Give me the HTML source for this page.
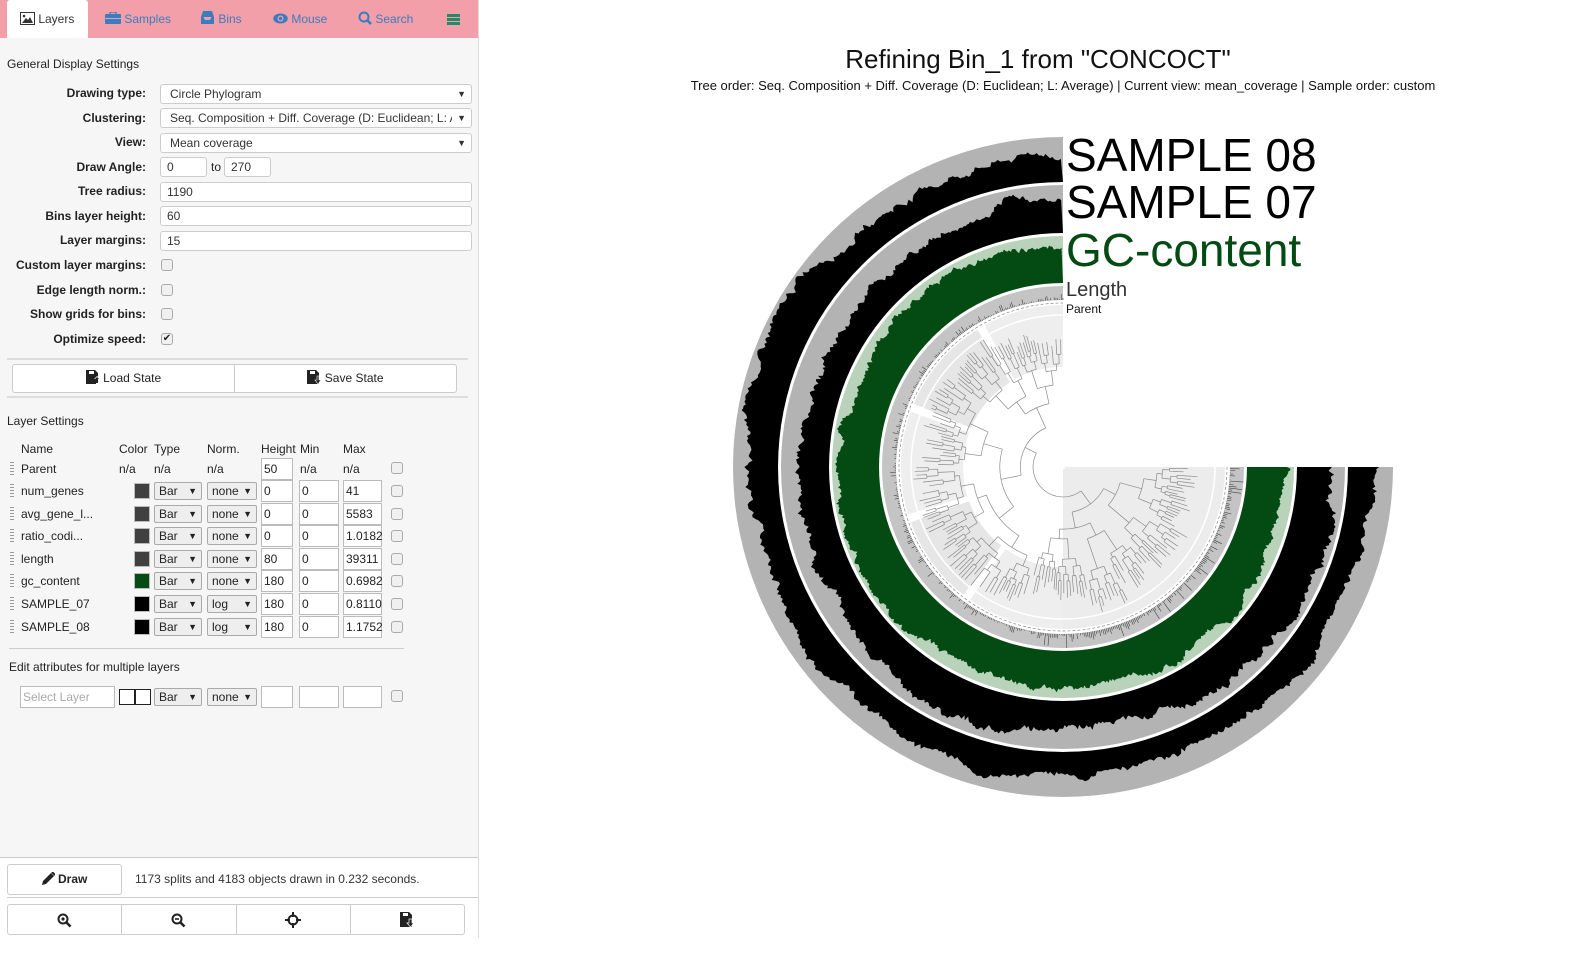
<!DOCTYPE html>
<html><head><meta charset="utf-8">
<style>
*{box-sizing:border-box}
body{margin:0;width:1596px;height:954px;background:#fff;font-family:"Liberation Sans",sans-serif;position:relative;overflow:hidden;color:#222}
.a{position:absolute}
#panel{position:absolute;left:0;top:0;width:479px;height:938px;border-right:1px solid #ddd;background:#f6f6f6}
#tabs{position:absolute;left:0;top:0;width:478px;height:38px;background:#f39faa}
.tab{position:absolute;top:0;height:38px;line-height:38px;font-size:12px;color:#3a7cc0}
.lbl{position:absolute;left:0;width:146px;text-align:right;font-weight:bold;font-size:12px;color:#222}
.inp{position:absolute;left:160px;width:312px;height:20px;border:1px solid #ccc;border-radius:3px;background:#fff;font-size:12px;padding-left:9px;line-height:18px;color:#333}
.cb{position:absolute;width:12px;height:12px;border:1px solid #aaa;border-radius:3px;background:#f0f0f0}
.t{position:absolute;font-size:12px;color:#222}
.sw{position:absolute;left:134px;width:16px;height:16px;border:1px solid #bbb}
.sel{position:absolute;height:18px;border:1px solid #aaa;border-radius:2px;background:#eee;font-size:12px;line-height:16px;padding-left:4px;color:#222}
.sel span{position:absolute;right:4px;font-size:9px}
.bx{position:absolute;height:22px;border:1px solid #bbb;background:#fff;font-size:12px;line-height:20px;padding-left:2px}
.hd{position:absolute;left:10px;width:4px;height:14px;background:repeating-linear-gradient(#999 0 1px,transparent 1px 3px);}
.hd:after{content:"";position:absolute;left:3px;top:0;width:1px;height:14px;background:repeating-linear-gradient(#999 0 1px,transparent 1px 3px)}
.btn{position:absolute;border:1px solid #ccc;background:#fff;font-size:12px;text-align:center;color:#222}
.hr{position:absolute;height:2px;background:#ddd}
</style></head><body>
<div id="panel">
<div class="a" style="left:0;top:858px;width:478px;height:80px;background:#fff"></div>
<div id="tabs">
 <div class="tab" style="left:7px;width:81px;background:#fff;color:#333;padding-left:13px;border-radius:3px 3px 0 0">
  <svg width="15" height="13" viewBox="0 0 15 13" style="vertical-align:-2px"><rect x="0.5" y="0.5" width="14" height="12" fill="#fff" stroke="#333"/><path d="M2 11 L6 6 L8 8 L10 5 L13 11Z" fill="#333"/><circle cx="4" cy="4" r="1.3" fill="#333"/></svg> Layers</div>
 <div class="tab" style="left:105px"><svg width="16" height="12" viewBox="0 0 16 12" style="vertical-align:-1px"><rect x="0" y="2" width="16" height="10" rx="1" fill="#3a7cc0"/><rect x="5" y="0" width="6" height="3" fill="none" stroke="#3a7cc0" stroke-width="1.3"/><rect x="0" y="6" width="16" height="1" fill="#f39faa"/></svg> Samples</div>
 <div class="tab" style="left:200px"><svg width="15" height="14" viewBox="0 0 15 14" style="vertical-align:-2px"><path d="M1 6 L3 0 H12 L14 6 V13 H1Z" fill="#3a7cc0"/><path d="M3.5 6 H11.5 L10 9 H5Z" fill="#f39faa"/></svg> Bins</div>
 <div class="tab" style="left:273px"><svg width="15" height="11" viewBox="0 0 15 11" style="vertical-align:-1px"><ellipse cx="7.5" cy="5.5" rx="7.3" ry="5" fill="#3a7cc0"/><circle cx="7.5" cy="5.5" r="3" fill="#f39faa"/><circle cx="7.5" cy="5.5" r="1.8" fill="#3a7cc0"/></svg> Mouse</div>
 <div class="tab" style="left:358px"><svg width="14" height="14" viewBox="0 0 14 14" style="vertical-align:-2px"><circle cx="6" cy="6" r="4.5" fill="none" stroke="#3a7cc0" stroke-width="2"/><path d="M9 9 L13 13" stroke="#3a7cc0" stroke-width="2.5"/></svg> Search</div>
 <div class="a" style="left:447px;top:14px;width:13px;height:11px;background:linear-gradient(#248a6a 0 3px,transparent 3px 4px,#248a6a 4px 7px,transparent 7px 8px,#248a6a 8px 11px)"></div>
</div>
<div class="t" style="left:7px;top:57px">General Display Settings</div>

<div class="lbl" style="top:86px">Drawing type:</div><div class="inp" style="top:84px">Circle Phylogram<span class="a" style="right:5px;font-size:9px">▼</span></div>
<div class="lbl" style="top:111px">Clustering:</div><div class="inp" style="top:108px;overflow:hidden;white-space:nowrap">Seq. Composition + Diff. Coverage (D: Euclidean; L: A<span class="a" style="right:0;padding:0 5px;background:#fff;font-size:9px">▼</span></div>
<div class="lbl" style="top:135px">View:</div><div class="inp" style="top:133px">Mean coverage<span class="a" style="right:5px;font-size:9px">▼</span></div>
<div class="lbl" style="top:160px">Draw Angle:</div><div class="inp" style="top:157px;width:47px;padding-left:6px">0</div><div class="t" style="left:211px;top:160px">to</div><div class="inp" style="top:157px;left:224px;width:47px;padding-left:6px">270</div>
<div class="lbl" style="top:184px">Tree radius:</div><div class="inp" style="top:182px;padding-left:6px">1190</div>
<div class="lbl" style="top:209px">Bins layer height:</div><div class="inp" style="top:206px;padding-left:6px">60</div>
<div class="lbl" style="top:233px">Layer margins:</div><div class="inp" style="top:231px;padding-left:6px">15</div>
<div class="lbl" style="top:258px">Custom layer margins:</div><div class="cb" style="left:161px;top:259px"></div>
<div class="lbl" style="top:283px">Edge length norm.:</div><div class="cb" style="left:161px;top:284px"></div>
<div class="lbl" style="top:307px">Show grids for bins:</div><div class="cb" style="left:161px;top:308px"></div>
<div class="lbl" style="top:332px">Optimize speed:</div><div class="cb" style="left:161px;top:333px;font-size:10px;line-height:10px;text-align:center">✔</div>

<div class="hr" style="left:7px;top:358px;width:461px"></div>
<div class="btn" style="left:12px;top:364px;width:223px;height:29px;line-height:27px;border-radius:3px 0 0 3px"><svg width="14" height="14" viewBox="0 0 14 14" style="vertical-align:-2px"><path d="M0 0 H9 L12 3 V14 H0Z" fill="#222"/><rect x="3" y="1" width="5" height="3" fill="#fff"/><path d="M11 6 L14 9 H12 V14 H10 V9 H8Z" fill="#fff"/><path d="M11 7 L13 9 H12 V13 H10 V9 H9Z" fill="#222"/></svg> Load State</div>
<div class="btn" style="left:234px;top:364px;width:223px;height:29px;line-height:27px;border-radius:0 3px 3px 0"><svg width="14" height="14" viewBox="0 0 14 14" style="vertical-align:-2px"><path d="M0 0 H9 L12 3 V14 H0Z" fill="#222"/><rect x="3" y="1" width="5" height="3" fill="#fff"/><path d="M10 6 H12 V10 H14 L11 14 L8 10 H10Z" fill="#222" stroke="#fff" stroke-width="0.6"/></svg> Save State</div>
<div class="hr" style="left:7px;top:396px;width:461px"></div>

<div class="t" style="left:7px;top:414px">Layer Settings</div>
<div class="t" style="left:21px;top:442px">Name</div><div class="t" style="left:119px;top:442px">Color</div><div class="t" style="left:154px;top:442px">Type</div><div class="t" style="left:207px;top:442px">Norm.</div><div class="t" style="left:261px;top:442px">Height</div><div class="t" style="left:300px;top:442px">Min</div><div class="t" style="left:343px;top:442px">Max</div>

<div class="hd" style="top:462px"></div><div class="t" style="left:21px;top:462px">Parent</div><div class="t" style="left:119px;top:462px">n/a</div><div class="t" style="left:154px;top:462px">n/a</div><div class="t" style="left:207px;top:462px">n/a</div><div class="bx" style="left:261px;top:458px;width:32px">50</div><div class="t" style="left:300px;top:462px">n/a</div><div class="t" style="left:343px;top:462px">n/a</div><div class="cb" style="left:391px;top:462px"></div>

<div class="hd" style="top:484px"></div><div class="t" style="left:21px;top:484px">num_genes</div><div class="sw" style="top:483px;background:#404040"></div><div class="sel" style="left:154px;top:482px;width:48px">Bar<span>▼</span></div><div class="sel" style="left:207px;top:482px;width:50px">none<span>▼</span></div><div class="bx" style="left:261px;top:480px;width:32px">0</div><div class="bx" style="left:299px;top:480px;width:40px">0</div><div class="bx" style="left:343px;top:480px;width:39px">41</div><div class="cb" style="left:391px;top:485px"></div>

<div class="hd" style="top:507px"></div><div class="t" style="left:21px;top:507px">avg_gene_l...</div><div class="sw" style="top:506px;background:#404040"></div><div class="sel" style="left:154px;top:505px;width:48px">Bar<span>▼</span></div><div class="sel" style="left:207px;top:505px;width:50px">none<span>▼</span></div><div class="bx" style="left:261px;top:503px;width:32px">0</div><div class="bx" style="left:299px;top:503px;width:40px">0</div><div class="bx" style="left:343px;top:503px;width:39px">5583</div><div class="cb" style="left:391px;top:508px"></div>

<div class="hd" style="top:529px"></div><div class="t" style="left:21px;top:529px">ratio_codi...</div><div class="sw" style="top:528px;background:#404040"></div><div class="sel" style="left:154px;top:527px;width:48px">Bar<span>▼</span></div><div class="sel" style="left:207px;top:527px;width:50px">none<span>▼</span></div><div class="bx" style="left:261px;top:525px;width:32px">0</div><div class="bx" style="left:299px;top:525px;width:40px">0</div><div class="bx" style="left:343px;top:525px;width:39px">1.0182</div><div class="cb" style="left:391px;top:530px"></div>

<div class="hd" style="top:552px"></div><div class="t" style="left:21px;top:552px">length</div><div class="sw" style="top:551px;background:#404040"></div><div class="sel" style="left:154px;top:550px;width:48px">Bar<span>▼</span></div><div class="sel" style="left:207px;top:550px;width:50px">none<span>▼</span></div><div class="bx" style="left:261px;top:548px;width:32px">80</div><div class="bx" style="left:299px;top:548px;width:40px">0</div><div class="bx" style="left:343px;top:548px;width:39px">39311</div><div class="cb" style="left:391px;top:553px"></div>

<div class="hd" style="top:574px"></div><div class="t" style="left:21px;top:574px">gc_content</div><div class="sw" style="top:573px;background:#064a14"></div><div class="sel" style="left:154px;top:572px;width:48px">Bar<span>▼</span></div><div class="sel" style="left:207px;top:572px;width:50px">none<span>▼</span></div><div class="bx" style="left:261px;top:570px;width:32px">180</div><div class="bx" style="left:299px;top:570px;width:40px">0</div><div class="bx" style="left:343px;top:570px;width:39px">0.6982</div><div class="cb" style="left:391px;top:575px"></div>

<div class="hd" style="top:597px"></div><div class="t" style="left:21px;top:597px">SAMPLE_07</div><div class="sw" style="top:596px;background:#000"></div><div class="sel" style="left:154px;top:595px;width:48px">Bar<span>▼</span></div><div class="sel" style="left:207px;top:595px;width:50px">log<span>▼</span></div><div class="bx" style="left:261px;top:593px;width:32px">180</div><div class="bx" style="left:299px;top:593px;width:40px">0</div><div class="bx" style="left:343px;top:593px;width:39px">0.8110</div><div class="cb" style="left:391px;top:598px"></div>

<div class="hd" style="top:620px"></div><div class="t" style="left:21px;top:620px">SAMPLE_08</div><div class="sw" style="top:619px;background:#000"></div><div class="sel" style="left:154px;top:618px;width:48px">Bar<span>▼</span></div><div class="sel" style="left:207px;top:618px;width:50px">log<span>▼</span></div><div class="bx" style="left:261px;top:616px;width:32px">180</div><div class="bx" style="left:299px;top:616px;width:40px">0</div><div class="bx" style="left:343px;top:616px;width:39px">1.1752</div><div class="cb" style="left:391px;top:621px"></div>

<div class="hr" style="left:9px;top:648px;width:395px;height:1px;background:#ccc"></div>
<div class="t" style="left:9px;top:660px">Edit attributes for multiple layers</div>
<div class="bx" style="left:20px;top:686px;width:95px;color:#aaa">Select Layer</div>
<div class="a" style="left:119px;top:689px;width:32px;height:16px;border:1px solid #222;background:linear-gradient(90deg,#fff 0 14px,#222 14px 16px,#fff 16px)"></div>
<div class="sel" style="left:154px;top:688px;width:48px">Bar<span>▼</span></div><div class="sel" style="left:207px;top:688px;width:50px">none<span>▼</span></div>
<div class="bx" style="left:261px;top:686px;width:32px"></div><div class="bx" style="left:299px;top:686px;width:40px"></div><div class="bx" style="left:343px;top:686px;width:39px"></div><div class="cb" style="left:391px;top:690px"></div>

<div class="hr" style="left:0;top:857px;width:478px;height:1px;background:#ccc"></div>
<div class="btn" style="left:7px;top:864px;width:115px;height:31px;line-height:29px;font-weight:bold;border-radius:3px"><svg width="13" height="13" viewBox="0 0 13 13" style="vertical-align:-2px"><path d="M0 13 L1 9 L9 1 L12 4 L4 12Z" fill="#222"/><path d="M10 0 L13 3" stroke="#222" stroke-width="2"/></svg> Draw</div>
<div class="t" style="left:135px;top:872px;color:#333">1173 splits and 4183 objects drawn in 0.232 seconds.</div>
<div class="hr" style="left:7px;top:897px;width:471px;height:1px;background:#ccc"></div>
<div class="btn" style="left:7px;top:904px;width:458px;height:31px;border-radius:3px"></div>
<div class="a" style="left:121px;top:905px;width:1px;height:29px;background:#ccc"></div>
<div class="a" style="left:236px;top:905px;width:1px;height:29px;background:#ccc"></div>
<div class="a" style="left:350px;top:905px;width:1px;height:29px;background:#ccc"></div>
<svg class="a" style="left:57px;top:913px" width="15" height="15" viewBox="0 0 15 15"><circle cx="6" cy="6" r="4.5" fill="none" stroke="#222" stroke-width="2"/><circle cx="6" cy="6" r="1.6" fill="#222"/><path d="M9 9 L13.5 13.5" stroke="#222" stroke-width="2.6"/></svg>
<svg class="a" style="left:171px;top:913px" width="15" height="15" viewBox="0 0 15 15"><circle cx="6" cy="6" r="4.5" fill="none" stroke="#222" stroke-width="2"/><path d="M4 6 H8" stroke="#222" stroke-width="1.6"/><path d="M9 9 L13.5 13.5" stroke="#222" stroke-width="2.6"/></svg>
<svg class="a" style="left:285px;top:912px" width="16" height="16" viewBox="0 0 16 16"><circle cx="8" cy="8" r="4.5" fill="none" stroke="#222" stroke-width="2"/><path d="M8 0 V5 M8 11 V16 M0 8 H5 M11 8 H16" stroke="#222" stroke-width="2"/></svg>
<svg class="a" style="left:400px;top:912px" width="14" height="15" viewBox="0 0 14 15"><path d="M0 0 H9 L12 3 V15 H0Z" fill="#222"/><rect x="3" y="1" width="5" height="3" fill="#fff"/><path d="M9 7 H12 V11 H14 L10.5 15 L7 11 H9Z" fill="#222" stroke="#fff" stroke-width="0.7"/></svg>
</div>

<div class="a" style="left:479px;top:44px;width:1117px;text-align:center;font-size:26px;color:#111;padding-left:1px;">Refining Bin_1 from "CONCOCT"</div>
<div class="a" style="left:480px;top:78px;width:1166px;text-align:center;font-size:13px;color:#111">Tree order: Seq. Composition + Diff. Coverage (D: Euclidean; L: Average) | Current view: mean_coverage | Sample order: custom</div>

<svg class="a" style="left:0;top:0" width="1596" height="954" id="ch">
<g id="static">
<path d="M1393,467 A330,330 0 1 1 1063,137 L1063,182 A285,285 0 1 0 1348,467Z" fill="#b3b3b3"/>
<path d="M1380,467 A317,317 0 1 1 1063,150 L1063,182 A285,285 0 1 0 1348,467Z" fill="#000"/>
<path d="M1345,467 A282,282 0 1 1 1063,185 L1063,233 A234,234 0 1 0 1297,467Z" fill="#b3b3b3"/>
<path d="M1334,467 A271,271 0 1 1 1063,196 L1063,233 A234,234 0 1 0 1297,467Z" fill="#000"/>
<path d="M1294,467 A231,231 0 1 1 1063,236 L1063,283 A184,184 0 1 0 1247,467Z" fill="#b9d3bb"/>
<path d="M1289,467 A226,226 0 1 1 1063,241 L1063,283 A184,184 0 1 0 1247,467Z" fill="#044a13"/>
<path d="M1244,467 A181,181 0 1 1 1063,286 L1063,300 A167,167 0 1 0 1230,467Z" fill="#c4c4c4"/>
</g>
<g id="dyn"></g>
<text x="1066" y="171" font-size="46" fill="#000" font-family="Liberation Sans">SAMPLE 08</text>
<text x="1066" y="218" font-size="46" fill="#000" font-family="Liberation Sans">SAMPLE 07</text>
<text x="1066" y="266" font-size="46" fill="#044a13" font-family="Liberation Sans">GC-content</text>
<text x="1066" y="296" font-size="20" fill="#333" font-family="Liberation Sans">Length</text>
<text x="1066" y="313" font-size="12" fill="#111" font-family="Liberation Sans">Parent</text>
</svg>
<script>
(function(){
var cx=1063,cy=467,s=7;function R(){s=(s*9301+49297)%233280;return s/233280;}
function P(a,r){var t=a*Math.PI/180;return (cx+r*Math.cos(t)).toFixed(1)+","+(cy+r*Math.sin(t)).toFixed(1);}
function ring(ri,lo,hi,col,step,rough){var d="M"+P(0,ri),v=(lo+hi)/2,pts=[];
 for(var a=0;a<=270;a+=step){v+= (R()-0.5)*rough; v=Math.max(lo,Math.min(hi,v)); var r=v+(R()-0.5)*rough*0.6; pts.push(P(a,r));}
 d+=" L"+pts.join(" L")+" L"+P(270,ri)+" A"+ri+","+ri+" 0 1 0 "+P(0,ri)+"Z";return '<path d="'+d+'" fill="'+col+'"/>';}
function sect(a0,a1,r0,r1,col){var lg=(a1-a0)>180?1:0;return '<path d="M'+P(a0,r1)+' A'+r1+','+r1+' 0 '+lg+' 1 '+P(a1,r1)+' L'+P(a1,r0)+' A'+r0+','+r0+' 0 '+lg+' 0 '+P(a0,r0)+'Z" fill="'+col+'"/>';}
var g="";
g+='<path d="M1393,467 A330,330 0 1 1 1063,137 L1063,182 A285,285 0 1 0 1348,467Z" fill="#b3b3b3"/>';
g+=ring(285,306,326,"#000",0.4,5);
g+='<path d="M1345,467 A282,282 0 1 1 1063,185 L1063,233 A234,234 0 1 0 1297,467Z" fill="#b3b3b3"/>';
g+=ring(234,258,278,"#000",0.4,5);
g+='<path d="M1294,467 A231,231 0 1 1 1063,236 L1063,283 A184,184 0 1 0 1247,467Z" fill="#b9d3bb"/>';
g+=ring(184,218,229,"#044a13",0.4,4);
g+='<path d="M1244,467 A181,181 0 1 1 1063,286 L1063,300 A167,167 0 1 0 1230,467Z" fill="#c4c4c4"/>';
var sp="";for(var a=0;a<270;a+=0.6){var h=R()<0.7?(R()*3):(R()*7); if(a<100)h*=2.2; sp+="M"+P(a,167)+" L"+P(a,167+Math.min(14,h))+" ";}
g+='<path d="'+sp+'" stroke="#444" stroke-width="0.6" fill="none"/>';
// white tree area w/ sector shading
var sects=[[0,90],[90,125],[128,160],[163,200],[203,238],[241,270]];
g+=sect(0,90,2,162,"#ececec");
for(var i=1;i<sects.length;i++){g+=sect(sects[i][0],sects[i][1],100,162,i%2?"#eeeeee":"#e6e6e6");}
g+='<path d="M'+P(0,164)+' A164,164 0 1 1 '+P(270,164)+'" fill="none" stroke="#888" stroke-width="0.7" stroke-dasharray="3 2"/>';
g+='<path d="M'+P(0,152)+' A152,152 0 1 1 '+P(270,152)+'" fill="none" stroke="#fff" stroke-width="1.5"/>';
// tree
var tr="";
function node(a0,a1,r,depth){var am=(a0+a1)/2;
 if(depth>=9||(a1-a0)<2.2){var L=r+4+R()*8;tr+="M"+P(am,r)+" L"+P(am,Math.min(150,L))+" ";return am;}
 var sp=a0+(a1-a0)*(0.3+R()*0.4);
 var st=depth<4?12+R()*12:5+R()*7;
 var r1=Math.min(140,r+st),r2=Math.min(140,r+st*(0.6+R()*0.8));
 var c1=node(a0,sp,r1,depth+1),c2=node(sp,a1,r2,depth+1);
 tr+="M"+P(c1,r1)+" L"+P(c1,r)+" M"+P(c2,r2)+" L"+P(c2,r)+" ";
 var lg=Math.abs(c2-c1)>180?1:0;
 tr+="M"+P(c1,r)+" A"+r+","+r+" 0 "+lg+" 1 "+P(c2,r)+" ";
 return (c1+c2)/2;}
node(0,270,30,0);
g+='<path d="'+tr+'" stroke="#8a8a8a" stroke-width="0.7" fill="none"/>';
document.getElementById("static").innerHTML="";
document.getElementById("dyn").innerHTML=g;
})();
</script>
</body></html>
